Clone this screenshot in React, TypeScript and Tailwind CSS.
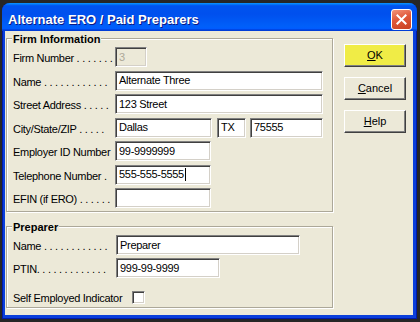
import type { ReactNode } from 'react';

const font = "font-['Liberation_Sans',Arial,sans-serif]";

// Classic sunken edit box
const edit =
  'h-[20px] flex items-center px-[3px] border border-t-[#808080] border-l-[#808080] border-b-white border-r-white ' +
  'shadow-[inset_1px_1px_0_#404040,inset_-1px_-1px_0_#d4d0c8] text-[11px] tracking-[-0.3px] whitespace-nowrap overflow-hidden';

function Field({ w, value, disabled, caret }: { w: string; value?: string; disabled?: boolean; caret?: boolean }) {
  return (
    <div className={`${edit} ${w} ${disabled ? 'bg-[#ece9d8] text-[#aca899]' : 'bg-white text-black'}`}>
      {value}
      {caret && <span className="ml-[1px] w-[1px] h-[13px] bg-black" />}
    </div>
  );
}

function Row({ label, labelW = 'w-[102px]', children }: { label: string; labelW?: string; children: ReactNode }) {
  return (
    <div className="flex items-center h-[20px]">
      <div className={`${labelW} shrink-0 whitespace-nowrap pt-[3px] text-[11px] tracking-[-0.3px] text-black`}>
        {label}
      </div>
      {children}
    </div>
  );
}

function GroupBox({ title, className, children }: { title: string; className: string; children: ReactNode }) {
  return (
    <div
      className={`relative w-[327px] border border-[#aca899] shadow-[1px_1px_0_#fff,inset_1px_1px_0_#fff] pl-[6px] pt-[8px] ${className}`}
    >
      <div className="absolute -top-[6px] left-[5px] px-[1px] bg-[#ece9d8] text-[11px] leading-[13px] font-bold text-black">
        {title}
      </div>
      {children}
    </div>
  );
}

function Button({ hot, rest, yellow }: { hot: string; rest: string; yellow?: boolean }) {
  return (
    <button
      className={`w-[62px] h-[23px] flex items-center justify-center text-[11px] text-black border border-t-white border-l-white border-b-[#404040] border-r-[#404040] shadow-[inset_-1px_-1px_0_#808080] ${
        yellow ? 'bg-[#f0ec46]' : 'bg-[#ece9d8]'
      }`}
    >
      <span className="underline underline-offset-1">{hot}</span>
      {rest}
    </button>
  );
}

export default function App() {
  return (
    <div className={`w-[420px] h-[322px] bg-[#262626] pt-[3px] pl-[2px] ${font}`}>
      <div className="w-[415px] h-[316px] rounded-t-[8px] overflow-hidden bg-[#0a3fdb] flex flex-col shadow-[inset_0_0_0_1px_#0019a8]">
        {/* Title bar */}
        <div className="h-[28px] shrink-0 flex items-start bg-[linear-gradient(180deg,#0997ff,#0053ee_10%,#0050ee_40%,#0060fa_85%,#005bff_92%,#003dd7_96%,#003dd7)]">
          <div className="pl-[6px] pt-[9px] text-[13px] leading-[16px] font-bold text-white [text-shadow:1px_1px_0_#0a1883]">
            Alternate ERO / Paid Preparers
          </div>
          <div className="ml-auto mr-[5px] mt-[6px] w-[21px] h-[21px] rounded-[3px] border border-white bg-[linear-gradient(160deg,#f3957a,#e0583a_45%,#c8401f)] flex items-center justify-center">
            <svg viewBox="0 0 21 21" className="w-[21px] h-[21px]">
              <path d="M6 6L15 15M15 6L6 15" stroke="#fff" strokeWidth="2.2" strokeLinecap="square" />
            </svg>
          </div>
        </div>

        {/* Client area */}
        <div className="flex-1 ml-[3px] mr-[4px] mb-[4px] bg-[#ece9d8] flex">
          <div className="ml-[1px]">
            <GroupBox title="Firm Information" className="mt-[7px] h-[174px]">
              <div className="flex flex-col gap-[3.5px]">
                <Row label="Firm Number . . . . . . .">
                  <Field w="w-[32px]" value="3" disabled />
                </Row>
                <Row label="Name . . . . . . . . . . . .">
                  <Field w="w-[208px]" value="Alternate Three" />
                </Row>
                <Row label="Street Address . . . . .">
                  <Field w="w-[208px]" value="123 Street" />
                </Row>
                <Row label="City/State/ZIP . . . . .">
                  <Field w="w-[97px]" value="Dallas" />
                  <div className="ml-[5px]">
                    <Field w="w-[29px]" value="TX" />
                  </div>
                  <div className="ml-[4px]">
                    <Field w="w-[73px]" value="75555" />
                  </div>
                </Row>
                <Row label="Employer ID Number">
                  <Field w="w-[96px]" value="99-9999999" />
                </Row>
                <Row label="Telephone Number .">
                  <Field w="w-[96px]" value="555-555-5555" caret />
                </Row>
                <Row label="EFIN (if ERO) . . . . . .">
                  <Field w="w-[96px]" />
                </Row>
              </div>
            </GroupBox>

            <GroupBox title="Preparer" className="mt-[14px] h-[82px]">
              <div className="flex flex-col gap-[3px]">
                <Row label="Name . . . . . . . . . . . ." labelW="w-[103px]">
                  <Field w="w-[184px]" value="Preparer" />
                </Row>
                <Row label="PTIN. . . . . . . . . . . . ." labelW="w-[103px]">
                  <Field w="w-[104px]" value="999-99-9999" />
                </Row>
                <div className="mt-[6px]">
                  <Row label="Self Employed Indicator" labelW="w-[119px]">
                    <div className="w-[13px] h-[13px] bg-white border border-t-[#808080] border-l-[#808080] border-b-white border-r-white shadow-[inset_1px_1px_0_#404040,inset_-1px_-1px_0_#d4d0c8]" />
                  </Row>
                </div>
              </div>
            </GroupBox>
          </div>

          <div className="ml-[11px] mt-[13px] flex flex-col gap-[10px]">
            <Button hot="O" rest="K" yellow />
            <Button hot="C" rest="ancel" />
            <Button hot="H" rest="elp" />
          </div>
        </div>
      </div>
    </div>
  );
}
